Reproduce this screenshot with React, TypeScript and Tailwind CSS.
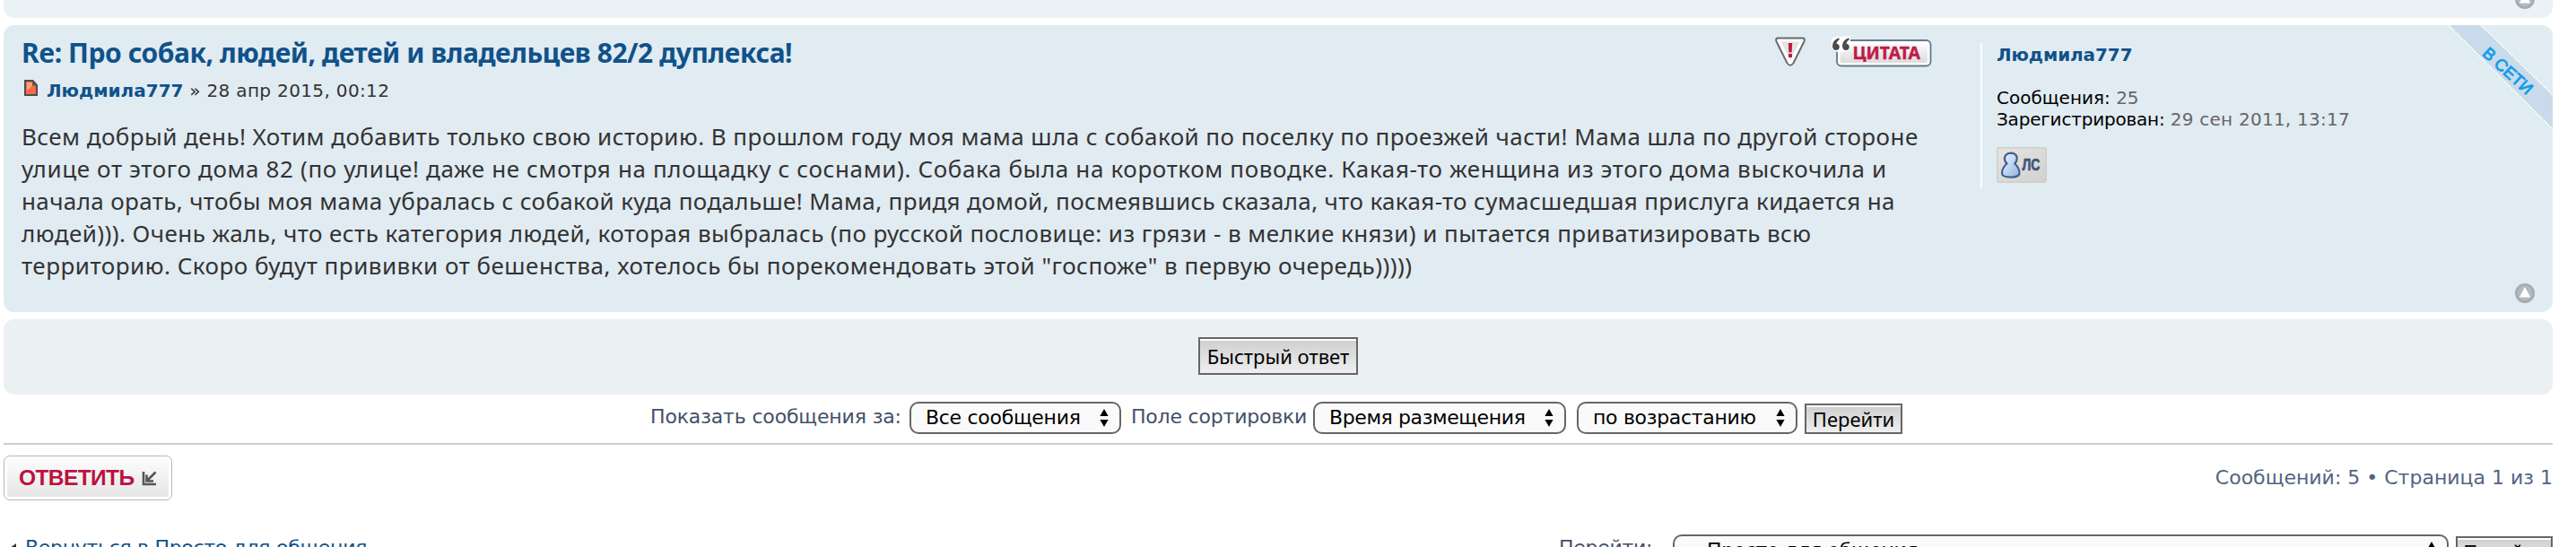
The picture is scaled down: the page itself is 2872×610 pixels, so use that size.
import type { ReactNode } from "react";

const verdana = "font-['DejaVu_Sans',sans-serif]";
const lucida = "font-['Noto_Sans',sans-serif]";

function UpIcon() {
  return (
    <svg width="22" height="22" viewBox="0 0 22 22">
      <circle cx="11" cy="11" r="11" fill="#a3abb0" />
      <circle cx="11" cy="11" r="8.5" fill="#b3babe" />
      <path d="M11 4 L17.2 15.6 H4.8 Z" fill="#fff" />
    </svg>
  );
}

function ReportIcon() {
  return (
    <svg width="36" height="36" viewBox="0 0 36 36">
      <path d="M3.5 2.5 H32.5 Q34.5 3.5 33.6 6 L21.4 30.5 Q18 35 14.6 30.5 L2.4 6 Q1.5 3.5 3.5 2.5 Z" fill="#fff" stroke="#6b6b6b" strokeWidth="2" strokeLinejoin="round" />
      <path d="M7.5 6.5 H28.5 L18 27.5 Z" fill="#e4e4e6" />
      <path d="M15.8 8 H20.2 L19.6 18.4 H16.4 Z" fill="#c01a40" />
      <rect x="16" y="20" width="4" height="4" fill="#c01a40" />
    </svg>
  );
}

function QuoteButton() {
  return (
    <svg width="114" height="38" viewBox="0 0 114 38">
      <defs>
        <linearGradient id="quoteFill" x1="0" y1="0" x2="0" y2="1">
          <stop offset="0" stopColor="#fbfbfb" />
          <stop offset="1" stopColor="#dcdcdc" />
        </linearGradient>
      </defs>
      <rect x="7" y="5" width="104.5" height="28.5" rx="5" fill="#fff" stroke="#66798a" strokeWidth="1.8" />
      <rect x="10.5" y="8.5" width="97.5" height="21.5" rx="3" fill="url(#quoteFill)" />
      <path d="M1 4 Q4 0 10 1 L22 0 L22 10 Q22 18 14 18 Q2 19 1 12 Z" fill="#fff" />
      <path
        d="M9.2 2.2 Q2 4.8 2 11.2 Q2.2 16 6 16 Q9.8 15.8 9.8 12.2 Q9.6 9 6.4 8.8 Q6.8 6 9.8 4 Z M20.2 2.2 Q13 4.8 13 11.2 Q13.2 16 17 16 Q20.8 15.8 20.8 12.2 Q20.6 9 17.4 8.8 Q17.8 6 20.8 4 Z"
        fill="#4a4a4a"
      />
      <text x="24.5" y="26.2" textLength="75.5" lengthAdjust="spacingAndGlyphs" fontSize="19.5" fontWeight="700" fontFamily="'Noto Sans', sans-serif" fill="#c01a48" stroke="#c01a48" strokeWidth="0.4">
        ЦИТАТА
      </text>
    </svg>
  );
}

function PostIcon() {
  return (
    <svg width="16" height="18" viewBox="0 0 16 18">
      <path d="M1 1 H9.5 L14 6 V17 H1 Z" fill="#ff6a45" stroke="#4c4c4c" strokeWidth="2" />
      <path d="M3 3 H8.5 V7 L3 12 Z" fill="#f7a58b" />
      <path d="M9 2 V6.5 H13.5 Z" fill="#5a5a5a" />
    </svg>
  );
}

function MessageButton() {
  return (
    <svg width="56" height="40" viewBox="0 0 56 40">
      <defs>
        <linearGradient id="pmFill" x1="0" y1="0" x2="1" y2="1">
          <stop offset="0" stopColor="#e6e5e2" />
          <stop offset="1" stopColor="#d2d1cd" />
        </linearGradient>
        <linearGradient id="pawnFill" x1="0" y1="0" x2="1" y2="1">
          <stop offset="0" stopColor="#eef5ff" />
          <stop offset="1" stopColor="#92b4e2" />
        </linearGradient>
      </defs>
      <rect width="56" height="40" rx="3" fill="#cfcecb" />
      <rect x="1.5" y="1.5" width="53" height="37" rx="2" fill="url(#pmFill)" />
      <path
        d="M11.5 18.5 Q8.5 15.5 9 11.8 Q10 6.8 16 6.6 Q22 6.8 22.8 11.8 Q23 15.5 20.3 18.5 Q25.5 23 25.5 29.5 Q25 33.4 15.8 33.6 Q6.4 33.4 6 29.5 Q6 23 11.5 18.5 Z"
        fill="url(#pawnFill)"
        stroke="#41608f"
        strokeWidth="2.2"
      />
      <text x="28.5" y="26" textLength="20" lengthAdjust="spacingAndGlyphs" fontSize="18.5" fontWeight="700" fontFamily="'Liberation Sans', sans-serif" fill="#3d557d" stroke="#3d557d" strokeWidth="0.7">
        ЛС
      </text>
    </svg>
  );
}

function OnlineRibbon() {
  return (
    <svg width="116" height="116" viewBox="0 0 116 116">
      <path d="M0 0 H36 L116 78 V116 Z" fill="#c9dbea" />
      <path d="M0 0 L116 116 M36 0 L116 78" stroke="#fff" strokeWidth="1.6" strokeDasharray="2 1.4" fill="none" />
      <text
        transform="translate(40.5 28.5) rotate(42)"
        y="6"
        textLength="68"
        lengthAdjust="spacingAndGlyphs"
        fontSize="18.5"
        fontFamily="'Liberation Sans', sans-serif"
        fill="#159cec"
        stroke="#159cec"
        strokeWidth="0.9"
      >
        В СЕТИ
      </text>
    </svg>
  );
}

function Arrows() {
  return (
    <svg width="10" height="20" viewBox="0 0 10 20" className="shrink-0">
      <path d="M5 0 L9.6 8 H0.4 Z M5 20 L9.6 12 H0.4 Z" fill="#000" />
    </svg>
  );
}

function Select({ box, children }: { box: string; children: ReactNode }) {
  return (
    <div className={`flex h-9 shrink-0 items-center justify-between rounded-[10px] border-2 border-[#666] bg-[#fafafa] pr-3 text-[22px] leading-8 text-black ${verdana} ${box}`}>
      <span className="whitespace-nowrap">{children}</span>
      <Arrows />
    </div>
  );
}

function Button({ box, children }: { box: string; children: ReactNode }) {
  return (
    <div className={`shrink-0 border-2 border-[#666] bg-white pt-0.5 ${box}`}>
      <div className={`flex h-full items-center justify-center whitespace-nowrap bg-linear-to-b from-[#d0d0d0] to-[#efefef] text-[22px] text-black ${lucida}`}>
        <span className="-mt-0.5">{children}</span>
      </div>
    </div>
  );
}

export default function App() {
  return (
    <div className="flex h-[610px] w-[2872px] flex-col overflow-hidden bg-white pl-1 pr-[26px]">
      <div className="flex h-5 shrink-0 items-start justify-end overflow-hidden rounded-b-[12px] bg-[#eaf2f6] pr-5">
        <div className="-mt-3">
          <UpIcon />
        </div>
      </div>

      <article className="relative mt-2 flex h-80 shrink-0 overflow-hidden rounded-[12px] bg-[#e1ebf2]">
        <div className="w-[2204px] shrink-0 pl-5 pt-3">
          <header className="flex h-9 items-start justify-between pr-[53px]">
            <h3 className={`mt-px whitespace-nowrap text-[30px] font-bold leading-9 tracking-[-0.44px] text-[#105289] ${lucida}`}>
              Re: Про собак, людей, детей и владельцев 82/2 дуплекса!
            </h3>
            <div className="flex gap-[27px]">
              <ReportIcon />
              <QuoteButton />
            </div>
          </header>
          <p className={`mt-[13px] flex h-6 items-start whitespace-pre pl-[3px] text-[20px] leading-6 text-[#333] ${verdana}`}>
            <span className="w-[25px]">
              <PostIcon />
            </span>
            <b className="text-[#105289]">Людмила777</b>
            <span className="tracking-[0.35px]"> » 28 апр 2015, 00:12</span>
          </p>
          <div className={`mt-[21px] whitespace-nowrap text-[26px] leading-9 text-[#333] ${lucida}`}>
            <p className="tracking-[0.44px]">Всем добрый день! Хотим добавить только свою историю. В прошлом году моя мама шла с собакой по поселку по проезжей части! Мама шла по другой стороне</p>
            <p className="tracking-[0.63px]">улице от этого дома 82 (по улице! даже не смотря на площадку с соснами). Собака была на коротком поводке. Какая-то женщина из этого дома выскочила и</p>
            <p className="tracking-[0.36px]">начала орать, чтобы моя мама убралась с собакой куда подальше! Мама, придя домой, посмеявшись сказала, что какая-то сумасшедшая прислуга кидается на</p>
            <p className="tracking-[0.44px]">людей))). Очень жаль, что есть категория людей, которая выбралась (по русской пословице: из грязи - в мелкие князи) и пытается приватизировать всю</p>
            <p className="tracking-[0.5px]">территорию. Скоро будут прививки от бешенства, хотелось бы порекомендовать этой "госпоже" в первую очередь)))))</p>
          </div>
        </div>

        <aside className={`mt-5 h-[162px] border-l-2 border-white pl-4 pt-[1px] text-[20px] leading-6 text-black ${verdana}`}>
          <p className="font-bold tracking-[-0.1px] text-[#105289]">Людмила777</p>
          <p className="mt-6 whitespace-pre">
            Сообщения: <span className="text-[#666]">25</span>
          </p>
          <p className="whitespace-nowrap">
            <span className="tracking-[-0.2px]">Зарегистрирован: </span>
            <span className="tracking-[0.25px] text-[#666]">29 сен 2011, 13:17</span>
          </p>
          <div className="mt-[19px]">
            <MessageButton />
          </div>
        </aside>

        <div className="absolute right-0 top-0">
          <OnlineRibbon />
        </div>
        <div className="absolute bottom-2.5 right-5">
          <UpIcon />
        </div>
      </article>

      <div className="mt-2 flex h-[84px] shrink-0 justify-center rounded-[12px] bg-[#ebf0f3] pt-5">
        <Button box="w-[178px] h-[42px]">Быстрый ответ</Button>
      </div>

      <div className={`mt-2 flex h-[46px] shrink-0 items-start pl-[721px] text-[22px] leading-[33px] text-[#425067] ${verdana}`}>
        <span className="w-[289px] whitespace-nowrap tracking-[-0.15px]">Показать сообщения за:</span>
        <Select box="w-[236px] pl-4 tracking-[-0.3px]">Все сообщения</Select>
        <span className="ml-[11px] w-[203px] whitespace-nowrap tracking-[-0.2px]">Поле сортировки</span>
        <Select box="w-[282px] pl-4 tracking-[-0.4px]">Время размещения</Select>
        <Select box="ml-3 w-[246px] pl-4 tracking-[-0.3px]">по возрастанию</Select>
        <Button box="ml-2 mt-0.5 w-[109px] h-[34px]">Перейти</Button>
      </div>

      <hr className="h-0.5 shrink-0 border-0 bg-[#ccc]" />

      <div className="mt-3 flex h-[50px] shrink-0 items-center justify-between">
        <div className="flex h-[50px] w-[188px] rounded-[7px] border-[1.5px] border-[#bab5ae] bg-white p-[3px]">
          <div className="flex w-full items-center justify-between rounded-[3px] bg-linear-to-b from-[#fcfcfc] to-[#e6e6e6] pl-[13px] pr-[13px]">
            <span className="whitespace-nowrap font-['Liberation_Sans',sans-serif] text-[24.5px] font-bold tracking-[-0.6px] text-[#bd1040]">ОТВЕТИТЬ</span>
            <svg width="17" height="17" viewBox="0 0 17 17" fill="none" stroke="#555" strokeWidth="2.6">
              <path d="M2 1 V15 H16" />
              <path d="M15.5 1.5 L6 11 M5.5 4.5 V11.5 H13" />
            </svg>
          </div>
        </div>
        <span className={`-mt-0.5 whitespace-nowrap text-[22px] text-[#536482] ${verdana}`}>Сообщений: 5 • Страница 1 из 1</span>
      </div>

      <div className={`mt-[38px] flex h-9 shrink-0 items-start text-[22px] leading-[29px] text-[#425067] ${verdana}`}>
        <svg width="8" height="10" viewBox="0 0 8 10" className="ml-1.5 mt-[10px]">
          <path d="M8 0 V10 L1 5 Z" fill="#333" />
        </svg>
        <span className="ml-[10px] w-[1710px] whitespace-nowrap tracking-[-0.3px] text-[#105289]">Вернуться в Просто для общения</span>
        <span className="w-[127px] whitespace-nowrap tracking-[-0.3px]">Перейти:</span>
        <Select box="w-[865px] pl-[36px] tracking-[-0.37px]">Просто для общения</Select>
        <Button box="ml-2 mt-0.5 w-[108px] h-[34px]">Перейти</Button>
      </div>
    </div>
  );
}
